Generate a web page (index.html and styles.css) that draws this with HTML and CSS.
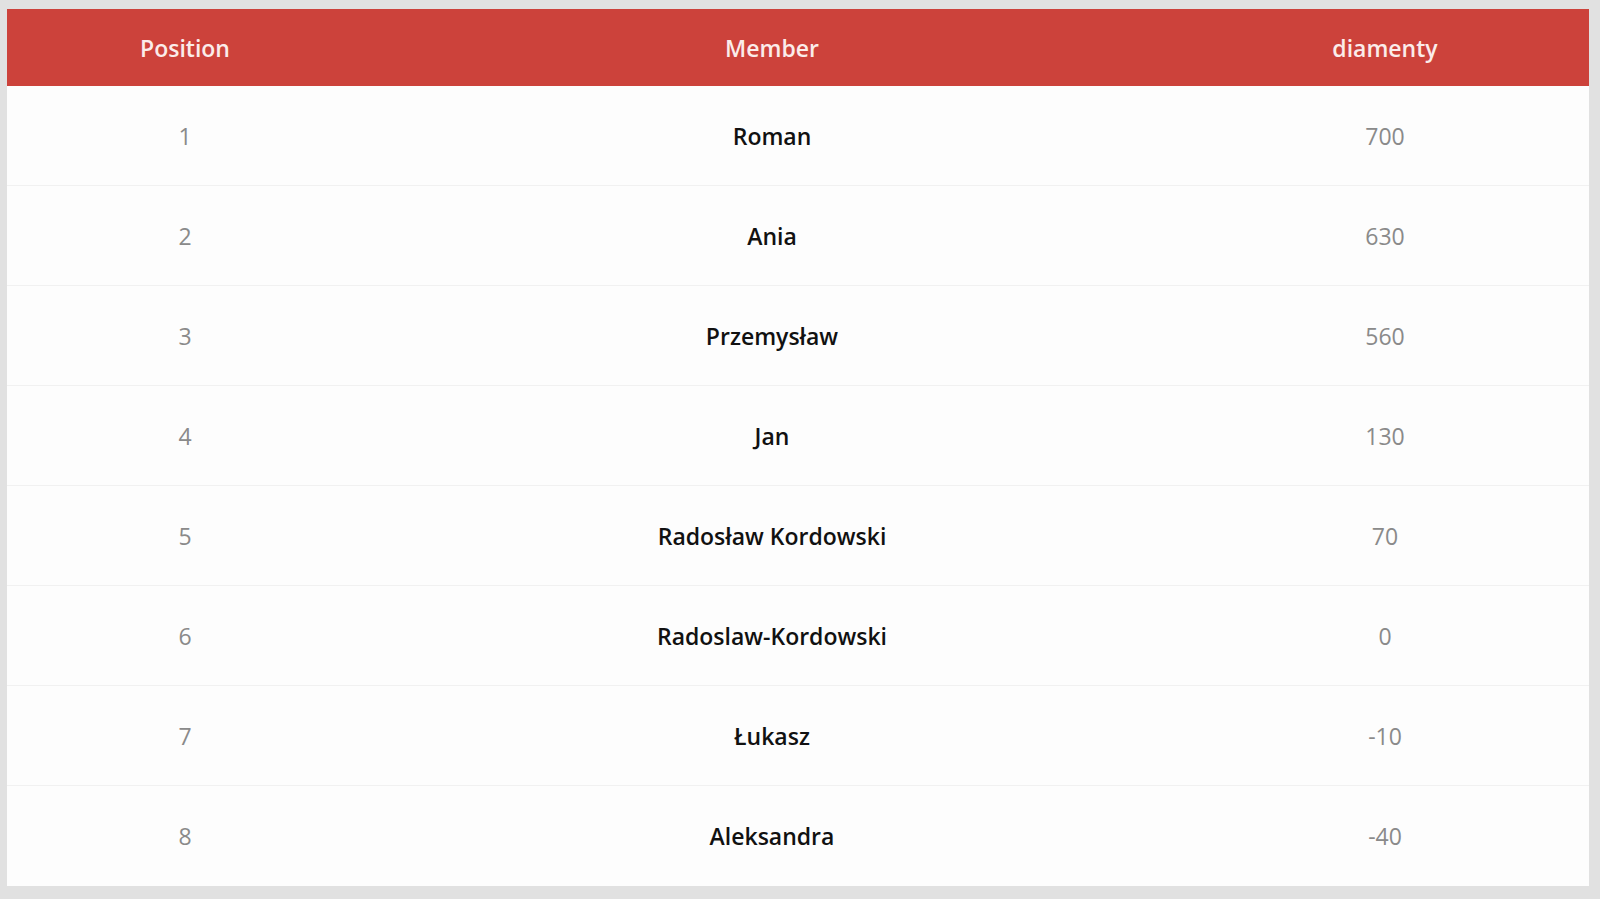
FILE: index.html
```html
<!DOCTYPE html>
<html>
<head>
<meta charset="utf-8">
<link rel="stylesheet" href="styles.css">
</head>
<body>
<div class="board">
  <div class="row head">
    <div class="cell">Position</div>
    <div class="cell">Member</div>
    <div class="cell">diamenty</div>
  </div>
  <div class="row"><div class="cell pos">1</div><div class="cell name">Roman</div><div class="cell val">700</div></div>
  <div class="row"><div class="cell pos">2</div><div class="cell name">Ania</div><div class="cell val">630</div></div>
  <div class="row"><div class="cell pos">3</div><div class="cell name">Przemysław</div><div class="cell val">560</div></div>
  <div class="row"><div class="cell pos">4</div><div class="cell name">Jan</div><div class="cell val">130</div></div>
  <div class="row"><div class="cell pos">5</div><div class="cell name">Radosław Kordowski</div><div class="cell val">70</div></div>
  <div class="row"><div class="cell pos">6</div><div class="cell name">Radoslaw-Kordowski</div><div class="cell val">0</div></div>
  <div class="row"><div class="cell pos">7</div><div class="cell name">Łukasz</div><div class="cell val">-10</div></div>
  <div class="row last"><div class="cell pos">8</div><div class="cell name">Aleksandra</div><div class="cell val">-40</div></div>
</div>
</body>
</html>
```
FILE: styles.css
```css
html, body {
  margin: 0;
  background: #e1e1e1;
}
body {
  padding: 9px 11px 13px 7px;
  font-family: "Open Sans", "Noto Sans", sans-serif;
}
.board {
  width: 1582px;
  background: #fdfdfd;
}
.row {
  display: grid;
  grid-template-columns: 356px 818px 408px;
  height: 100px;
  border-bottom: 1px solid #f1f1f1;
  box-sizing: border-box;
}
.row.last {
  border-bottom: none;
}
.row.head {
  height: 77px;
  background: #cc423b;
  border-bottom: none;
}
.cell {
  display: flex;
  align-items: center;
  justify-content: center;
  font-size: 23px;
}
.head .cell {
  color: #fbecea;
  font-weight: 600;
}
.pos, .val {
  color: #8a8a8a;
  font-weight: 400;
}
.name {
  color: #111111;
  font-weight: 600;
}
```
